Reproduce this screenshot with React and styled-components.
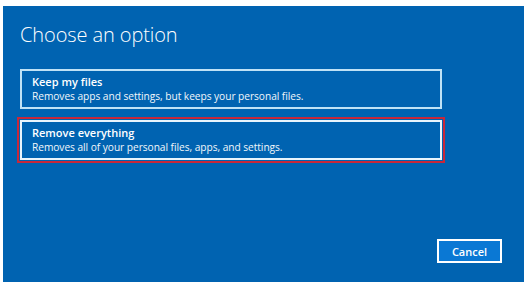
import React from "react";
import styled, { createGlobalStyle } from "styled-components";

const Global = createGlobalStyle`
  html, body {
    margin: 0;
    background: #ffffff;
    font-family: "Open Sans", "Noto Sans", Arial, sans-serif;
  }
`;

const Panel = styled.div`
  margin: 6px 0 0 3px;
  width: 521px;
  height: 276px;
  background: #0063b1;
  color: #ffffff;
  box-sizing: border-box;
  padding: 15px 22px 19px 17px;
  display: flex;
  flex-direction: column;
`;

const Title = styled.h1`
  margin: 0;
  font-size: 20px;
  font-weight: 300;
  line-height: 28px;
  letter-spacing: -0.1px;
`;

const Options = styled.div`
  display: flex;
  flex-direction: column;
  gap: 11px;
  margin-top: 20px;
`;

const Option = styled.div`
  width: 422px;
  height: 40px;
  box-sizing: border-box;
  border: 2px solid ${(p) => (p.$focused ? "#e8f4fc" : "#bfe2f6")};
  padding: 3px 10px 0;
  outline: ${(p) => (p.$focused ? "2px solid #c8283a" : "none")};
  outline-offset: 1px;
`;

const OptionTitle = styled.div`
  font-size: 11px;
  font-weight: 600;
  line-height: 15px;
`;

const OptionText = styled.div`
  font-size: 10.2px;
  font-weight: 400;
  line-height: 15px;
  letter-spacing: -0.05px;
  color: #f2f7fb;
`;

const Footer = styled.div`
  margin-top: auto;
  display: flex;
  justify-content: flex-end;
`;

const Button = styled.button`
  width: 65px;
  height: 24px;
  border: 2px solid #ffffff;
  background: #0a78d4;
  color: #ffffff;
  font-family: "Open Sans", "Noto Sans", Arial, sans-serif;
  font-size: 11px;
  font-weight: 600;
  padding: 0;
`;

export default function App() {
  return (
    <>
      <Global />
      <Panel>
        <Title>Choose an option</Title>
        <Options>
          <Option>
            <OptionTitle>Keep my files</OptionTitle>
            <OptionText>Removes apps and settings, but keeps your personal files.</OptionText>
          </Option>
          <Option $focused>
            <OptionTitle>Remove everything</OptionTitle>
            <OptionText>Removes all of your personal files, apps, and settings.</OptionText>
          </Option>
        </Options>
        <Footer>
          <Button>Cancel</Button>
        </Footer>
      </Panel>
    </>
  );
}
